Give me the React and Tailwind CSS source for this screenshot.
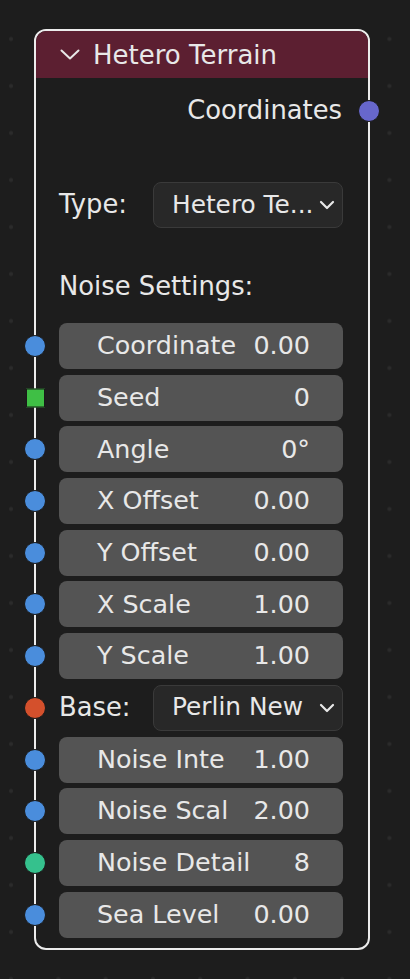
import React from "react";

const FONT = { fontFamily: '"DejaVu Sans", "Liberation Sans", sans-serif' };

function Socket({ color, square }) {
  if (square) {
    return (
      <div className="absolute left-[-33px] top-1/2 -translate-y-1/2 w-[19px] h-[19px] border border-[#1a1a1a]" style={{ background: color }} />
    );
  }
  return (
    <div className="absolute left-[-35px] top-1/2 -translate-y-1/2 w-[22px] h-[22px] rounded-full border border-[#1a1a1a]" style={{ background: color }} />
  );
}

function Field({ label, value, color, square }) {
  return (
    <div className="relative h-[46px]">
      <Socket color={color} square={square} />
      <div className="h-full rounded-[8px] bg-[#545454] flex items-center justify-between pl-[38px] pr-[33px] text-[25.4px] text-[#e8e8e8] leading-none">
        <span className="whitespace-nowrap">{label}</span>
        <span className="whitespace-nowrap">{value}</span>
      </div>
    </div>
  );
}

function Chevron({ className }) {
  return (
    <svg className={className} viewBox="0 0 16 10" fill="none" stroke="#e8e8e8" strokeWidth="2.2" strokeLinecap="round" strokeLinejoin="round">
      <path d="M2 2 L8 8 L14 2" />
    </svg>
  );
}

function Dropdown({ label, text }) {
  return (
    <div className="flex items-center h-[46px]">
      <span className="w-[94px] text-[25.8px] text-[#e8e8e8] leading-none">{label}</span>
      <div className="w-[190px] h-[46px] rounded-[8px] bg-[#282828] border border-[#3a3a3a] flex items-center justify-between pl-[18px] pr-[7px]">
        <span className="text-[24.8px] text-[#e8e8e8] leading-none whitespace-nowrap">{text}</span>
        <Chevron className="w-[16px] h-[10px] shrink-0" />
      </div>
    </div>
  );
}

export default function App() {
  const fields = [
    ["Coordinate", "0.00", "#4a8ddc"],
    ["Seed", "0", "#3fbf45", true],
    ["Angle", "0°", "#4a8ddc"],
    ["X Offset", "0.00", "#4a8ddc"],
    ["Y Offset", "0.00", "#4a8ddc"],
    ["X Scale", "1.00", "#4a8ddc"],
    ["Y Scale", "1.00", "#4a8ddc"],
  ];
  const fields2 = [
    ["Noise Inte", "1.00", "#4a8ddc"],
    ["Noise Scal", "2.00", "#4a8ddc"],
    ["Noise Detail", "8", "#35c18d"],
    ["Sea Level", "0.00", "#4a8ddc"],
  ];
  return (
    <div
      className="w-[410px] h-[979px] bg-[#1d1d1d] overflow-hidden pt-[29px] pl-[34px] bg-[radial-gradient(circle,#2b2b2b_1.6px,transparent_2.4px)] bg-[length:47.3px_47px] bg-[position:-12.6px_15.5px]"
      style={FONT}
    >
      <div className="relative w-[336px] border-2 border-[#ececec] rounded-[12px] bg-[#1d1d1d]">
        <div className="h-[47px] bg-[#5c1f31] rounded-t-[10px] flex items-center pl-[24px] gap-[13px]">
          <svg className="w-[20px] h-[11px]" viewBox="0 0 20 11" fill="none" stroke="#e8e8e8" strokeWidth="2" strokeLinecap="round" strokeLinejoin="round">
            <path d="M1.5 1.5 L10 9.5 L18.5 1.5" />
          </svg>
          <span className="text-[26px] text-[#e8e8e8] leading-none">Hetero Terrain</span>
        </div>
        <div className="relative h-[46px] mt-[10px] flex items-center justify-end pr-[26px]">
          <span className="text-[25.8px] text-[#e8e8e8] leading-none">Coordinates</span>
          <div className="absolute right-[-12px] top-1/2 -translate-y-1/2 w-[22px] h-[22px] rounded-full bg-[#6767cc] border border-[#1a1a1a]" />
        </div>
        <div className="pl-[23px] pr-[25px] pb-[10px]">
          <div className="mt-[48px]">
            <Dropdown label="Type:" text="Hetero Te..." />
          </div>
          <div className="mt-[36px] h-[46px] flex items-center text-[25.8px] text-[#e8e8e8] leading-none">Noise Settings:</div>
          <div className="mt-[13px] flex flex-col gap-[5.7px]">
            {fields.map(([l, v, c, s]) => (
              <Field key={l} label={l} value={v} color={c} square={s} />
            ))}
            <div className="relative">
              <Socket color="#d4502c" />
              <Dropdown label="Base:" text="Perlin New" />
            </div>
            {fields2.map(([l, v, c]) => (
              <Field key={l} label={l} value={v} color={c} />
            ))}
          </div>
        </div>
      </div>
    </div>
  );
}
